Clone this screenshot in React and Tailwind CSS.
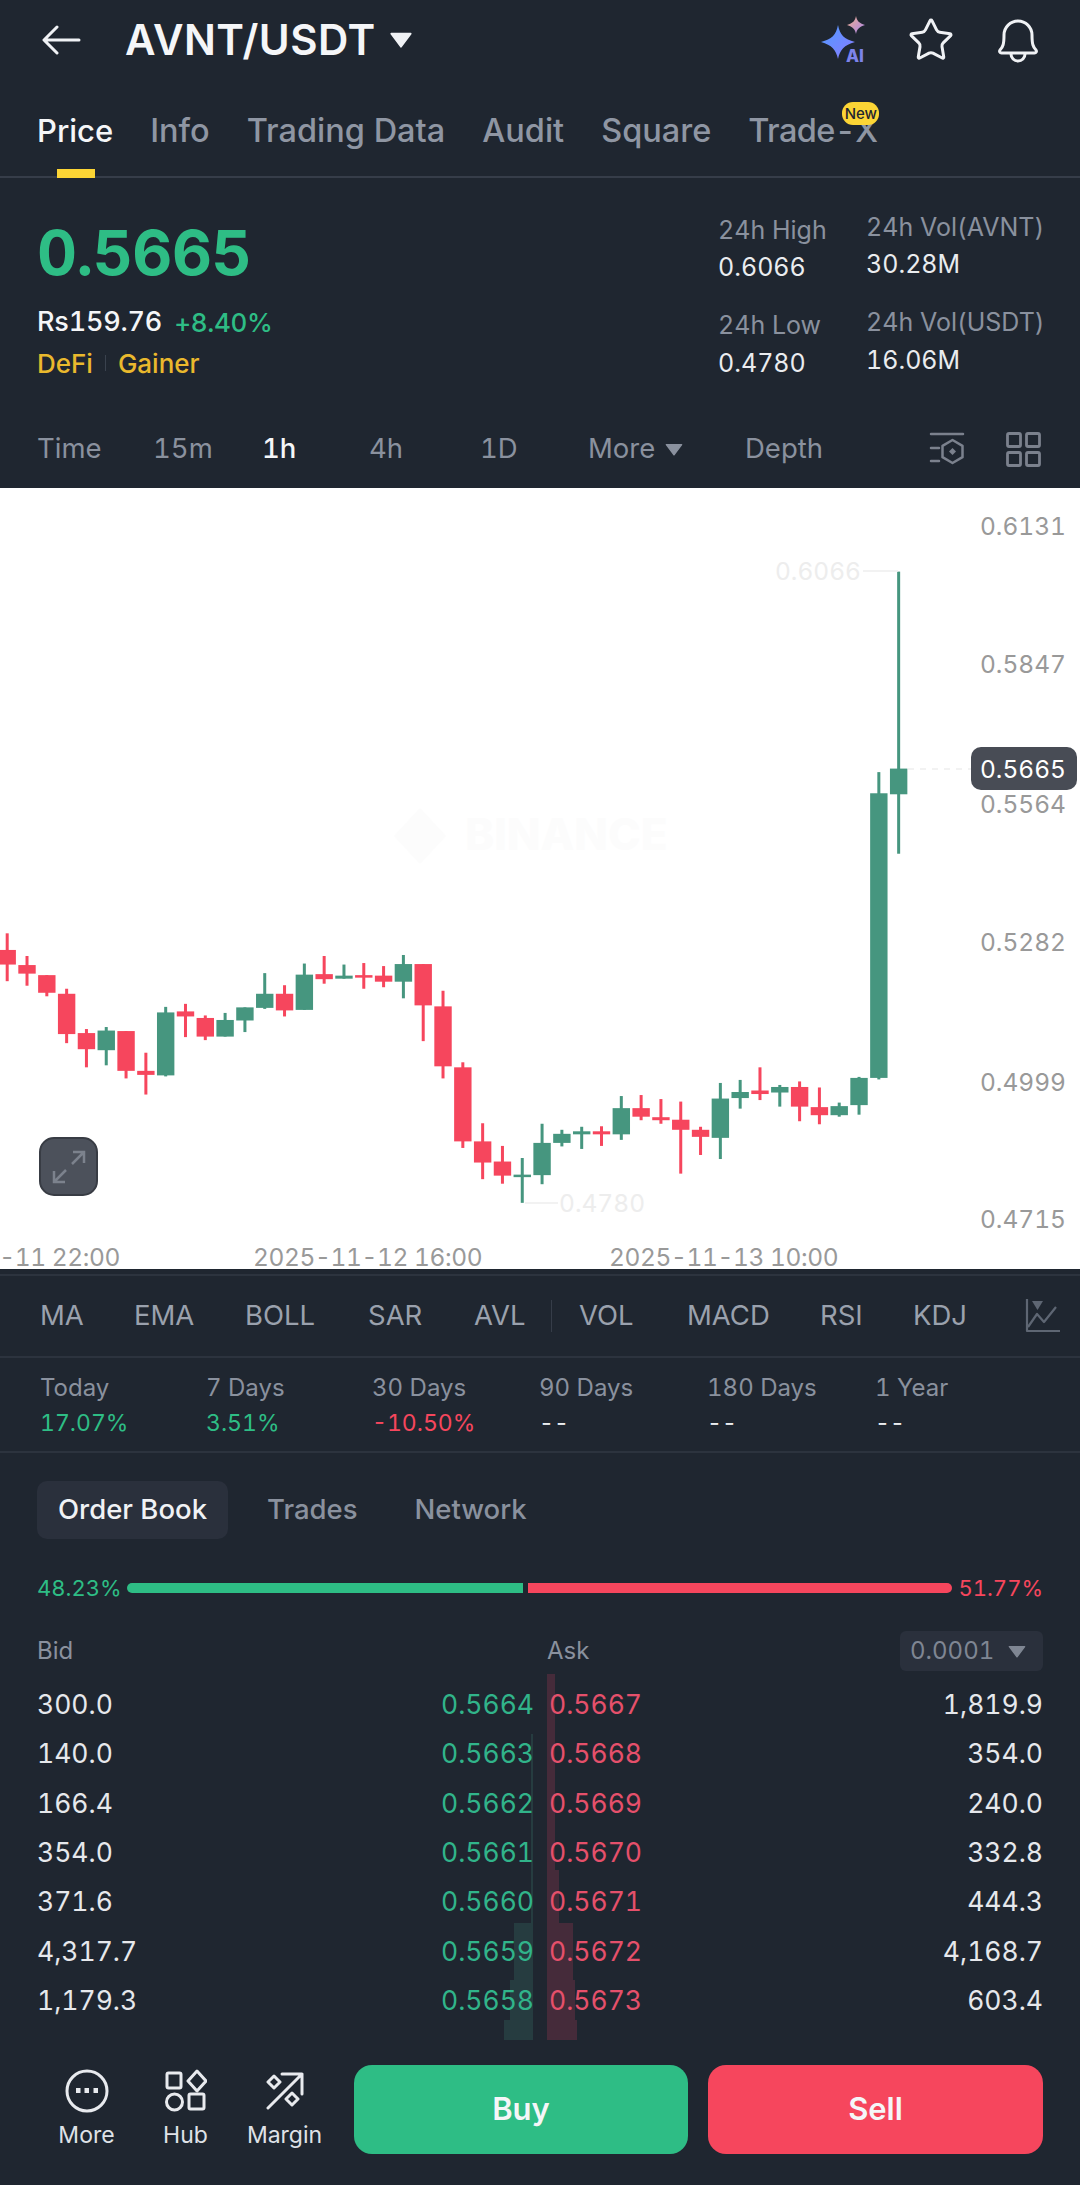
import { Star } from "lucide-react";

// candle values are traced off the chart: [isUp, wickTop, bodyTop, bodyBottom, wickBottom]
const candles = [
  [0, 880, 913, 942, 975],
  [0, 925, 943, 960, 984],
  [0, 963, 963, 998, 1005],
  [0, 990, 1000, 1080, 1098],
  [0, 1070, 1078, 1110, 1146],
  [1, 1066, 1073, 1112, 1142],
  [0, 1074, 1074, 1153, 1168],
  [0, 1117, 1153, 1161, 1200],
  [1, 1026, 1037, 1162, 1164],
  [0, 1020, 1035, 1045, 1086],
  [0, 1043, 1048, 1085, 1092],
  [1, 1038, 1052, 1085, 1085],
  [1, 1027, 1027, 1053, 1076],
  [1, 959, 1000, 1028, 1030],
  [0, 983, 1000, 1033, 1045],
  [1, 940, 962, 1032, 1032],
  [0, 925, 961, 971, 980],
  [1, 942, 964, 970, 970],
  [0, 939, 963, 968, 990],
  [0, 945, 964, 976, 987],
  [1, 923, 941, 976, 1009],
  [0, 941, 941, 1023, 1094],
  [0, 994, 1025, 1144, 1168],
  [0, 1136, 1146, 1293, 1306],
  [0, 1257, 1293, 1335, 1368],
  [0, 1302, 1333, 1361, 1377],
  [1, 1326, 1359, 1363, 1415],
  [1, 1258, 1296, 1360, 1378],
  [1, 1270, 1278, 1296, 1303],
  [1, 1264, 1273, 1279, 1308],
  [0, 1263, 1273, 1279, 1302],
  [1, 1203, 1227, 1279, 1290],
  [0, 1201, 1227, 1244, 1251],
  [0, 1209, 1245, 1251, 1258],
  [0, 1214, 1250, 1270, 1357],
  [0, 1264, 1270, 1284, 1320],
  [1, 1177, 1208, 1286, 1328],
  [1, 1171, 1195, 1207, 1228],
  [0, 1146, 1192, 1199, 1211],
  [1, 1181, 1185, 1196, 1224],
  [0, 1174, 1185, 1224, 1253],
  [0, 1186, 1225, 1241, 1259],
  [1, 1216, 1223, 1241, 1244],
  [1, 1165, 1167, 1221, 1240],
  [1, 560, 602, 1167, 1170],
  [1, 162, 553, 604, 722],
];

const scaleY = (v) => 2 + v / 1.985;

const axisLabels = [
  ["0.6131", 38],
  ["0.5847", 176],
  ["0.5564", 316],
  ["0.5282", 454],
  ["0.4999", 594],
  ["0.4715", 731],
];

const tabs = ["Info", "Trading Data", "Audit", "Square"];
const indicatorsLeft = [["MA", 94], ["EMA", 111], ["BOLL", 123], ["SAR", 106], ["AVL", 78]];
const indicatorsRight = [["VOL", 108], ["MACD", 133], ["RSI", 93], ["KDJ", 112]];

const periods = [
  ["Today", "17.07%", "text-[#2ebd85]"],
  ["7 Days", "3.51%", "text-[#2ebd85]"],
  ["30 Days", "-10.50%", "text-[#f6465d]"],
  ["90 Days", "--", "text-[#eaecef]"],
  ["180 Days", "--", "text-[#eaecef]"],
  ["1 Year", "--", "text-[#eaecef]"],
];

const rows = [
  ["300.0", "0.5664", "0.5667", "1,819.9"],
  ["140.0", "0.5663", "0.5668", "354.0"],
  ["166.4", "0.5662", "0.5669", "240.0"],
  ["354.0", "0.5661", "0.5670", "332.8"],
  ["371.6", "0.5660", "0.5671", "444.3"],
  ["4,317.7", "0.5659", "0.5672", "4,168.7"],
  ["1,179.3", "0.5658", "0.5673", "603.4"],
];

function Caret({ className }) {
  return (
    <svg className={className} viewBox="0 0 20 14" fill="currentColor">
      <path d="M1.5 1.5h17L10 13z" stroke="currentColor" strokeWidth="1.5" strokeLinejoin="round" />
    </svg>
  );
}

function BackIcon() {
  return (
    <svg width="39" height="30" viewBox="0 0 39 30" fill="none" stroke="#f0f2f5" strokeWidth="3" strokeLinecap="round" strokeLinejoin="round">
      <path d="M37 15H3M15 2L2 15l13 13" />
    </svg>
  );
}

function AiIcon() {
  return (
    <svg width="50" height="48" viewBox="0 0 50 48">
      <defs>
        <linearGradient id="aiBig" x1="0" y1="0" x2="1" y2="1">
          <stop offset="0" stopColor="#4f9bff" />
          <stop offset="1" stopColor="#8a7bff" />
        </linearGradient>
        <linearGradient id="aiSmall" x1="0" y1="0" x2="1" y2="1">
          <stop offset="0" stopColor="#f0b08a" />
          <stop offset="1" stopColor="#a884f0" />
        </linearGradient>
      </defs>
      <path d="M19 9c2 10 6 14 17 17-11 3-15 8-17 17-2-9-6-14-17-17 11-3 15-7 17-17z" fill="url(#aiBig)" />
      <path d="M37 0c1 5 3 7 9 9-6 2-8 4-9 9-1-5-3-7-9-9 6-2 8-4 9-9z" fill="url(#aiSmall)" />
      <text x="27" y="46" fontFamily="Inter, sans-serif" fontWeight="800" fontSize="17" fill="#7d83ea">AI</text>
    </svg>
  );
}

function BellIcon() {
  return (
    <svg width="42" height="46" viewBox="0 0 42 46" fill="none" stroke="#f0f2f5" strokeWidth="3" strokeLinejoin="round">
      <path d="M3 33c3-3 4-6 4-15a14 14 0 0 1 28 0c0 9 1 12 4 15 1 1.500 0 3-1.500 3h-33C3 36 2 34.500 3 33z" />
      <path d="M14 37a7 7 0 0 0 14 0" />
    </svg>
  );
}

function SettingsIcon() {
  return (
    <svg width="36" height="36" viewBox="0 0 36 36" fill="none" stroke="#7b818d" strokeWidth="2.500" strokeLinecap="round">
      <path d="M2 3h32M2 17h8M2 30h8" />
      <path d="M23.500 9l10 5.800v11.400l-10 5.800-10-5.800V14.800z" strokeLinejoin="round" />
      <path d="M23.500 17l3.500 3.500-3.500 3.500-3.500-3.500z" fill="#7b818d" stroke="none" />
    </svg>
  );
}

function GridIcon() {
  return (
    <svg width="35" height="35" viewBox="0 0 35 35" fill="none" stroke="#7b818d" strokeWidth="2.800">
      <rect x="1.500" y="1.500" width="13" height="13" rx="1.500" />
      <rect x="20.500" y="1.500" width="13" height="13" rx="1.500" />
      <rect x="1.500" y="20.500" width="13" height="13" rx="1.500" />
      <rect x="20.500" y="20.500" width="13" height="13" rx="1.500" />
    </svg>
  );
}

function LineChartIcon() {
  return (
    <svg width="36" height="36" viewBox="0 0 36 36" fill="none" stroke="#5e6673" strokeWidth="2.200" strokeLinejoin="round">
      <path d="M2 1v32h33" />
      <path d="M3 29l9-13 7 8 12-15" />
      <path d="M7 3h11l-5.500 9z" fill="#5e6673" stroke="none" />
    </svg>
  );
}

function MoreIcon() {
  return (
    <svg width="44" height="44" viewBox="0 0 44 44" fill="none" stroke="#e8eaee" strokeWidth="3">
      <circle cx="22" cy="22" r="20" />
      <path d="M11 19h4.500v5H11zM19.500 19H24v5h-4.500zM28.500 19H33v5h-4.500z" fill="#e8eaee" stroke="none" />
    </svg>
  );
}

function HubIcon() {
  return (
    <svg width="42" height="44" viewBox="0 0 42 44" fill="none" stroke="#e8eaee" strokeWidth="3" strokeLinejoin="round">
      <rect x="2" y="4" width="14" height="15" rx="1.500" />
      <path d="M32 2l9 10-9 10-9-10z" />
      <circle cx="9.500" cy="33" r="8" />
      <rect x="24" y="25" width="15" height="15" rx="1.500" />
    </svg>
  );
}

function MarginIcon() {
  return (
    <svg width="38" height="38" viewBox="0 0 38 38" fill="none" stroke="#e8eaee" strokeWidth="3" strokeLinejoin="round" strokeLinecap="round">
      <path d="M2 36L36 2M16 2h20v20" />
      <path d="M8 4l6 6-6 6-6-6zM26 21l6 6-6 6-6-6z" />
    </svg>
  );
}

function NavItem({ icon, label }) {
  return (
    <div className="w-[99px] pt-[3px] flex flex-col items-center">
      <div className="h-[46px] flex items-center justify-center">{icon}</div>
      <span className="mt-[7px] text-[23px] leading-[28px] text-[#dfe2e7]">{label}</span>
    </div>
  );
}

function Chart() {
  return (
    <div className="relative h-[781px] bg-white">
      <svg className="block tabular-nums" width="1080" height="781" viewBox="0 0 1080 781" fontFamily="Inter, sans-serif" fontSize="24.5">
        {/* watermark */}
        <text x="465" y="362" fontSize="44" fontWeight="800" fill="#fcfcfc">BINANCE</text>
        <path d="M420 320l26 28-26 28-26-28z" fill="#fcfcfc" />
        {candles.map(([up, wickTop, bodyTop, bodyBottom, wickBottom], i) => {
          const cx = 7.2 + i * 19.81;
          const color = up ? "#46967f" : "#f6465d";
          return (
            <g key={i} fill={color}>
              <rect x={cx - 1.5} y={scaleY(wickTop)} width="3" height={scaleY(wickBottom) - scaleY(wickTop)} />
              <rect x={cx - 8.7} y={scaleY(bodyTop)} width="17.4" height={Math.max(scaleY(bodyBottom) - scaleY(bodyTop), 2.5)} />
            </g>
          );
        })}
        {axisLabels.map(([label, y]) => (
          <text key={label} x="1066" y={y} textAnchor="end" dominantBaseline="central" fill="#999999">
            {label}
          </text>
        ))}
        <text x="861" y="83" textAnchor="end" dominantBaseline="central" fill="#ededed">0.6066</text>
        <path d="M863 83h35" stroke="#eeeeee" strokeWidth="1.500" />
        <text x="559" y="715" dominantBaseline="central" fill="#ededed">0.4780</text>
        <path d="M525 715h33" stroke="#eeeeee" strokeWidth="1.500" />
        <path d="M908 281h63" stroke="#eeeeee" strokeWidth="1.500" strokeDasharray="6 6" />
        <rect x="971" y="259" width="106" height="43" rx="10" fill="#484c55" />
        <text x="1066" y="281" textAnchor="end" dominantBaseline="central" fill="#ffffff">0.5665</text>
        <g letterSpacing="-0.4" dominantBaseline="central" fill="#999999">
          <text x="120" y="769" textAnchor="end" dominantBaseline="central">-11 22:00</text>
          <text x="253" y="769" dominantBaseline="central">2025-11-12 16:00</text>
          <text x="609" y="769" dominantBaseline="central">2025-11-13 10:00</text>
        </g>
      </svg>
      <button className="absolute left-[39px] top-[649px] w-[59px] h-[59px] rounded-[15px] bg-[#4c515b] border-2 border-[#383c44] flex items-center justify-center">
        <svg width="36" height="36" viewBox="0 0 36 36" fill="none" stroke="#7c828d" strokeWidth="2.500">
          <path d="M21 15L33 3M22 3h11v11M15 21L3 33M3 22v11h11" />
        </svg>
      </button>
    </div>
  );
}

export default function App() {
  return (
    <div
      className="w-[1080px] h-[2185px] overflow-hidden bg-[#1f2630] text-[#eaecef] flex flex-col tabular-nums"
      style={{ fontFamily: "Inter, 'Liberation Sans', sans-serif" }}
    >
      {/* top bar */}
      <div className="h-[80px] flex items-center pl-[42px] pr-[41px]">
        <BackIcon />
        <span className="ml-[44px] text-[42px] leading-[48px] font-semibold text-[#f5f6f8] tracking-[0.5px]">AVNT/USDT</span>
        <Caret className="ml-[13px] w-[24px] h-[16px] text-[#f0f2f5]" />
        <div className="ml-auto flex items-center">
          <AiIcon />
          <Star size={48} strokeWidth={1.5} className="ml-[38px] text-[#f0f2f5]" />
          <div className="ml-[42px]">
            <BellIcon />
          </div>
        </div>
      </div>

      {/* tabs */}
      <div className="relative h-[98px] border-b-2 border-[#363d49] flex items-center gap-[37px] pl-[37px] pt-[6px] text-[32.5px] leading-[40px] font-medium text-[#8f96a3]">
        <span className="text-[31px] text-[#f5f6f8]">Price</span>
        {tabs.map((tab) => (
          <span key={tab}>{tab}</span>
        ))}
        <span className="relative tracking-[-0.6px]">
          Trade-X
          <span className="absolute left-[94px] -top-[9px] w-[37px] h-[23px] rounded-[11px] bg-[#fcd535] text-[#1f2630] text-[15px] leading-[23px] tracking-normal font-medium text-center">
            New
          </span>
        </span>
        <div className="absolute left-[57px] -bottom-[2px] w-[38px] h-[9px] bg-[#fcd535]" />
      </div>

      {/* price summary */}
      <div className="h-[232px] flex justify-between pl-[37px] pr-[38px]">
        <div className="pt-[43px]">
          <div className="text-[62px] leading-[64px] font-bold text-[#2ebd85] tracking-[-0.5px]">0.5665</div>
          <div className="mt-[20px] flex items-center gap-[12px] h-[34px]">
            <span className="text-[27px] font-medium text-[#f5f6f8] tracking-[-0.2px]">Rs159.76</span>
            <span className="text-[26px] font-medium text-[#2ebd85] tracking-[-0.3px]">+8.40%</span>
          </div>
          <div className="mt-[9px] flex items-center h-[30px] text-[26px] font-medium text-[#eab92d]">
            <span>DeFi</span>
            <span className="mx-[12px] w-px h-[16px] bg-[#3a424e]" />
            <span>Gainer</span>
          </div>
        </div>
        <div className="flex gap-[32px] text-[25px] leading-[32px] text-[#8a919e] whitespace-nowrap">
          <div className="w-[116px] pt-[36px]">
            <div>24h High</div>
            <div className="mt-[5px] text-[#eaecef]">0.6066</div>
            <div className="mt-[26px]">24h Low</div>
            <div className="mt-[6px] text-[#eaecef]">0.4780</div>
          </div>
          <div className="w-[176px] pt-[33px]">
            <div>24h Vol(AVNT)</div>
            <div className="mt-[5px] text-[#eaecef]">30.28M</div>
            <div className="mt-[26px]">24h Vol(USDT)</div>
            <div className="mt-[6px] text-[#eaecef]">16.06M</div>
          </div>
        </div>
      </div>

      {/* timeframes */}
      <div className="h-[78px] pl-[37px] grid grid-cols-[116px_109px_107px_111px_108px_157px_184px_77px_auto] items-center text-[27.5px] text-[#8a919e]">
        <span>Time</span>
        <span>15m</span>
        <span className="text-[#f5f6f8] font-medium">1h</span>
        <span>4h</span>
        <span>1D</span>
        <span className="flex items-center gap-[10px]">
          More
          <Caret className="w-[18px] h-[13px] text-[#8a919e]" />
        </span>
        <span>Depth</span>
        <SettingsIcon />
        <GridIcon />
      </div>

      <Chart />

      {/* indicators */}
      <div className="mt-[5px] h-[84px] border-y-2 border-[#2c333e] pl-[40px] flex items-center text-[27.5px] text-[#9aa1ad]">
        {indicatorsLeft.map(([name, width]) => (
          <span key={name} className="shrink-0" style={{ width }}>
            {name}
          </span>
        ))}
        <span className="w-px h-[32px] bg-[#363d49] mr-[27px] -ml-[1px]" />
        {indicatorsRight.map(([name, width]) => (
          <span key={name} className="shrink-0" style={{ width }}>
            {name}
          </span>
        ))}
        <LineChartIcon />
      </div>

      {/* period changes */}
      <div className="h-[95px] border-b-2 border-[#2c333e] pl-[40px] pt-[14px] grid grid-cols-[166px_166px_167px_168px_168px_auto] text-[24px] leading-[32px] text-[#8a919e]">
        {periods.map(([label, value, color]) => (
          <div key={label}>
            <div>{label}</div>
            <div className={`mt-[3px] text-[23px] ${color}`}>{value}</div>
          </div>
        ))}
      </div>

      {/* order book */}
      <div className="px-[37px] pt-[28px]">
        <div className="flex items-center h-[58px] text-[27.5px] font-medium text-[#8a919e]">
          <span className="h-full w-[191px] rounded-[10px] bg-[#2a303c] text-[#f0f2f5] flex items-center justify-center">Order Book</span>
          <span className="ml-[39px]">Trades</span>
          <span className="ml-[57px]">Network</span>
        </div>

        <div className="mt-[34px] h-[30px] flex items-center text-[22px]">
          <span className="w-[90px] text-[#2ebd85]">48.23%</span>
          <div className="w-[396px] h-[10px] rounded-l-full bg-[#2ebd85]" />
          <div className="ml-[5px] w-[424px] h-[10px] rounded-r-full bg-[#f6465d]" />
          <span className="ml-auto text-[#f6465d]">51.77%</span>
        </div>

        <div className="mt-[28px] h-[40px] flex items-center text-[24px] text-[#8a919e]">
          <span className="w-[510px]">Bid</span>
          <span>Ask</span>
          <span className="ml-auto w-[143px] h-full rounded-[6px] bg-[#2a303c] flex items-center pl-[10px] gap-[14px] text-[#7f8693]">
            0.0001
            <Caret className="w-[18px] h-[13px] text-[#7f8693]" />
          </span>
        </div>

        <div className="relative mt-[9px]">
          {/* depth bars */}
          <svg className="absolute left-[463px] -top-[6px]" width="100" height="366" viewBox="0 0 100 366">
            <path d="M33 60H31V249H14V306H10V346H4V366H33z" fill="#263c40" />
            <path d="M47 0H55V196H59V249H73V306H75V346H77V366H47z" fill="#452b3a" />
          </svg>
          {rows.map(([bid, bidPrice, askPrice, ask]) => (
            <div key={bidPrice} className="relative h-[49.4px] flex items-center text-[26.5px]">
              <span className="w-[404px] text-[#e6e8ec]">{bid}</span>
              <span className="w-[90px] text-right text-[#31b48a]">{bidPrice}</span>
              <span className="ml-[18px] text-[#e5506b]">{askPrice}</span>
              <span className="ml-auto text-[#e6e8ec]">{ask}</span>
            </div>
          ))}
        </div>
      </div>

      {/* bottom actions */}
      <div className="mt-[39px] flex items-start pl-[37px] pr-[37px]">
        <NavItem icon={<MoreIcon />} label="More" />
        <NavItem icon={<HubIcon />} label="Hub" />
        <NavItem icon={<MarginIcon />} label="Margin" />
        <button className="ml-[20px] w-[334px] h-[89px] rounded-[18px] bg-[#2ebd85] text-[#f5f6f8] text-[31px] font-semibold">Buy</button>
        <button className="ml-[20px] w-[335px] h-[89px] rounded-[18px] bg-[#f6465d] text-[#f5f6f8] text-[31px] font-semibold">Sell</button>
      </div>
    </div>
  );
}
